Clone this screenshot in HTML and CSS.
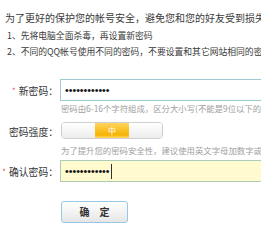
FILE: index.html
```html
<!DOCTYPE html>
<html>
<head>
<meta charset="utf-8">
<link rel="stylesheet" href="styles.css">
</head>
<body>
<div class="page">
  <div class="title">为了更好的保护您的帐号安全，避免您和您的好友受到损失</div>
  <div class="tips">
    <div>1、先将电脑全面杀毒，再设置新密码</div>
    <div>2、不同的QQ帐号使用不同的密码，不要设置和其它网站相同的密码</div>
  </div>
  <div class="form">
    <div class="row">
      <div class="label"><span class="star">*</span>新密码：</div>
      <div class="input"><span class="dots">••••••••••••</span></div>
    </div>
    <div class="hint hint1">密码由6-16个字符组成，区分大小写(不能是9位以下的纯数字)</div>
    <div class="row strength-row">
      <div class="label">密码强度：</div>
      <div class="meter">
        <div class="seg"></div>
        <div class="seg seg-on">中</div>
        <div class="seg"></div>
      </div>
    </div>
    <div class="hint hint2">为了提升您的密码安全性，建议使用英文字母加数字或符号的混合密码</div>
    <div class="row">
      <div class="label"><span class="star">*</span>确认密码：</div>
      <div class="input input-focus"><span class="dots">••••••••••••</span><span class="caret"></span></div>
    </div>
    <div class="btn-row">
      <div class="btn">确　定</div>
    </div>
  </div>
</div>
</body>
</html>
```

FILE: styles.css
```css
html, body {
  margin: 0;
  padding: 0;
  overflow: hidden;
  background: #fff;
}
.page {
  width: 261px;
  height: 249px;
  overflow: hidden;
  font-family: "Noto Sans CJK SC", "Noto Sans", sans-serif;
  color: #3a3a3a;
}
.title {
  padding: 10px 0 0 5px;
  font-size: 10px;
  line-height: 15px;
  white-space: nowrap;
}
.tips {
  margin: 3px 0 0 7px;
  font-size: 8.8px;
  line-height: 15.5px;
  white-space: nowrap;
}
.form {
  margin-top: 20px;
}
.row {
  display: flex;
  align-items: center;
  height: 22px;
}
.label {
  width: 58px;
  flex: none;
  text-align: right;
  font-size: 9.8px;
  padding-top: 2px;
  white-space: nowrap;
  color: #333;
}
.star {
  color: #e8505b;
  font-size: 8px;
  margin-right: 3px;
  vertical-align: 1px;
}
.input {
  flex: none;
  margin-left: 2px;
  width: 240px;
  height: 20px;
  border: 1px solid #9ccbd3;
  background: #fff;
  display: flex;
  align-items: center;
  padding-left: 4px;
  box-sizing: content-box;
}
.input-focus {
  background: #fffbcf;
  border-color: #a9cdb6;
}
.dots {
  font-family: "Liberation Sans", sans-serif;
  font-size: 10.6px;
  line-height: 1;
  color: #111;
}
.caret {
  width: 0;
  height: 15px;
  border-left: 1px solid #333;
  margin-left: 1px;
}
.hint {
  margin-left: 61px;
  font-size: 8.4px;
  line-height: 15px;
  color: #a0a0a0;
  white-space: nowrap;
}
.strength-row {
  margin-top: 6px;
  height: 17px;
}
.meter {
  flex: none;
  margin-left: 3px;
  width: 100px;
  height: 15px;
  border: 1px solid #cfcfcf;
  border-radius: 4px;
  overflow: hidden;
  display: flex;
}
.seg {
  flex: 1;
  background: linear-gradient(#ffffff, #ececec);
  font-size: 8px;
  line-height: 15px;
  text-align: center;
  color: #fff;
}
.seg-on {
  background: linear-gradient(#ffd55e, #f6b300 80%, #ffd870);
}
.hint2 {
  margin-top: 4px;
}
.hint2 + .row {
  margin-top: 2px;
}
.btn-row {
  margin: 19px 0 0 61px;
}
.btn {
  width: 65px;
  height: 20px;
  border: 1px solid #96c8e6;
  border-radius: 3px;
  background: linear-gradient(#ffffff, #e6e6e6);
  font-size: 10px;
  font-weight: bold;
  line-height: 20px;
  text-align: center;
  color: #333;
}
```
